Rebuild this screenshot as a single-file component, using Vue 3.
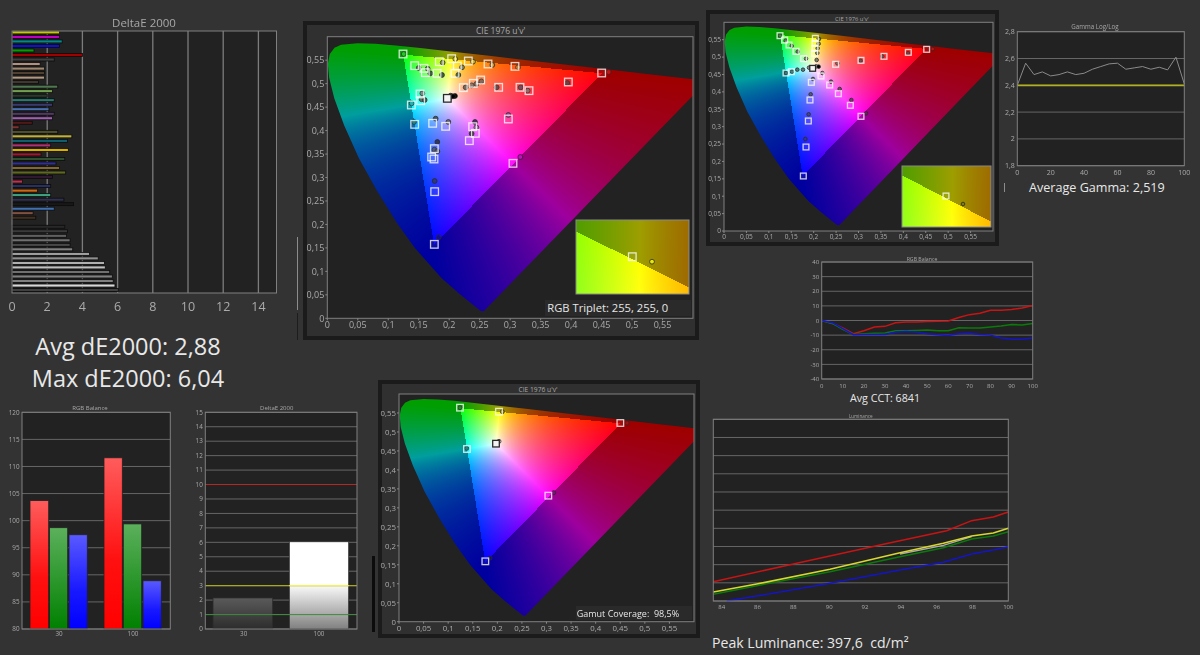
<script setup>
// CIE 1976 spectral locus (u', v'), 380nm tip round to the 650nm end
const LOCUS = [
  [0.2568, 0.0165], [0.2522, 0.0169], [0.2347, 0.035], [0.2161, 0.0549], [0.1877, 0.0871],
  [0.1441, 0.151], [0.1147, 0.2044], [0.0828, 0.2708], [0.0521, 0.3427], [0.0282, 0.4117],
  [0.0119, 0.4698], [0.0035, 0.5131], [0.0014, 0.5432], [0.0046, 0.5638], [0.0123, 0.577],
  [0.0231, 0.5837], [0.0501, 0.5868], [0.0792, 0.5856], [0.1127, 0.5821], [0.1531, 0.5766],
  [0.2026, 0.5694], [0.2623, 0.5604], [0.3315, 0.5501], [0.4035, 0.5393], [0.4692, 0.5296],
  [0.5203, 0.5219], [0.5565, 0.5165], [0.6233, 0.5065]
]

function fieldColor(u, v) {
  const d = 6 * u - 16 * v + 12
  const x = (9 * u) / d
  const y = (4 * v) / d
  const X = x / y
  const Z = (1 - x - y) / y
  const r = 3.2406 * X - 1.5372 - 0.4986 * Z
  const g = -0.9689 * X + 1.8758 + 0.0415 * Z
  const b = 0.0557 * X - 0.204 + 1.057 * Z
  // outside the display triangle the diagram is drawn darker and flatter
  const outside = r < 0 || g < 0 || b < 0
  const dim = outside ? 0.62 : 1
  const gamma = outside ? 1 : 1 / 1.25
  const cr = Math.max(r, 0)
  const cg = Math.max(g, 0)
  const cb = Math.max(b, 0)
  const max = Math.max(cr, cg, cb, 0.0001)
  return [cr, cg, cb].map((c) => Math.round(255 * dim * Math.pow(c / max, gamma)))
}

function paintField(canvas, w, h, range, masked) {
  if (!canvas) return
  canvas.width = w
  canvas.height = h
  const ctx = canvas.getContext('2d')
  const img = ctx.createImageData(w, h)
  const [u0, u1, v0, v1] = range
  for (let py = 0; py < h; py++) {
    for (let px = 0; px < w; px++) {
      const u = u0 + ((px + 0.5) / w) * (u1 - u0)
      const v = v1 - ((py + 0.5) / h) * (v1 - v0)
      const c = fieldColor(u, v)
      const i = (py * w + px) * 4
      img.data[i] = c[0]
      img.data[i + 1] = c[1]
      img.data[i + 2] = c[2]
      img.data[i + 3] = 255
    }
  }
  ctx.putImageData(img, 0, 0)
  if (!masked) return
  ctx.globalCompositeOperation = 'destination-in'
  ctx.beginPath()
  LOCUS.forEach(([u, v], i) => {
    const px = ((u - u0) / (u1 - u0)) * w
    const py = ((v1 - v) / (v1 - v0)) * h
    if (i === 0) ctx.moveTo(px, py)
    else ctx.lineTo(px, py)
  })
  ctx.closePath()
  ctx.fill()
}

// marker coordinates were read off 3x crops, so map them back to page pixels
const marks = (ox, oy, list) => list.map(([x, y, fill]) => ({ x: ox + x / 3, y: oy + y / 3, fill }))

const UV_TICKS = ['0', '0,05', '0,1', '0,15', '0,2', '0,25', '0,3', '0,35', '0,4', '0,45', '0,5', '0,55']
const FIELD = [0, 0.6, 0, 0.6]
const INSET = [0.17, 0.23, 0.5489, 0.5585]

function gamut(cfg) {
  const { x0, x1, y0, y1 } = cfg
  return {
    ...cfg,
    w: Math.round(x1 - x0),
    h: Math.round(y1 - y0),
    ticks: UV_TICKS.map((label, i) => ({
      label,
      x: x0 + (i / 12) * (x1 - x0),
      y: y1 - (i / 12) * (y1 - y0)
    }))
  }
}

const gamuts = [
  gamut({
    cls: 'cie-big',
    view: '303 21 396 320',
    box: [305, 23, 392, 315],
    x0: 327.3, x1: 693, y0: 36.7, y1: 318.3,
    titleX: 500.7, titleY: 34, titleSize: 8.5, tickSize: 9, squareSize: 7.6, dot: 2.4,
    inset: { x: 576, y: 220, w: 113, h: 74 },
    insetSquare: [632.3, 256.7], insetDot: [652, 261.7], insetFill: '#e8e800',
    caption: { text: 'RGB Triplet: 255, 255, 0', x: 547.3, y: 312, size: 11.2, bx: 545, by: 300, bw: 146, bh: 16 },
    squares: marks(300, 10, [
      [309, 132], [344, 167], [372, 175], [376, 188], [418, 155], [411, 190], [455, 146], [472, 168],
      [465, 190], [505, 153], [564, 162], [645, 169], [905, 189], [805, 216], [687, 242], [660, 232],
      [596, 232], [542, 210], [520, 220], [490, 233], [360, 252], [362, 272], [334, 285], [344, 343],
      [398, 340], [437, 349], [518, 350], [526, 370], [508, 392], [625, 327], [403, 416], [395, 441],
      [402, 447], [639, 460], [404, 545], [403, 703]
    ]),
    darkSquare: marks(300, 10, [[442, 265]])[0],
    dots: marks(300, 10, [
      [311, 132, '#0ccc0c'], [356, 174, '#3f5f3f'], [383, 176, '#5a7a50'], [391, 190, '#3f5f3f'],
      [428, 158, '#7a8a40'], [426, 195, '#3f5f3f'], [466, 147, '#e0d000'], [486, 172, '#8a8a60'],
      [475, 195, '#4a6a3a'], [519, 155, '#d8b820'], [577, 165, '#c8902a'], [654, 172, '#c87820'],
      [926, 186, '#d01010'], [802, 219, '#703030'], [683, 242, '#906060'], [662, 232, '#704050'],
      [590, 232, '#604040'], [544, 214, '#806050'], [529, 222, '#907060'], [515, 226, '#907060'],
      [497, 232, '#706050'], [367, 250, '#6a8a80'], [365, 268, '#507060'], [374, 270, '#406050'],
      [335, 280, '#10b0b0'], [342, 336, '#108080'], [407, 326, '#405870'], [445, 336, '#6a6a80'],
      [525, 336, '#503060'], [529, 352, '#a070b0'], [515, 371, '#403040'], [625, 315, '#a040a0'],
      [412, 396, '#303860'], [403, 419, '#405080'], [412, 424, '#505870'], [661, 441, '#c010c0'],
      [404, 513, '#303880'], [416, 682, '#1010a0'], [452, 257, '#2a2a2a'], [450, 262, '#777'],
      [465, 258, '#000'], [459, 259, '#000']
    ])
  }),
  gamut({
    cls: 'cie-small',
    view: '706 10 294 237',
    box: [708, 12, 289, 232],
    x0: 724, x1: 993, y0: 22.3, y1: 231,
    titleX: 852, titleY: 20.5, titleSize: 5.8, tickSize: 6.5, squareSize: 5.8, dot: 1.8,
    inset: { x: 902, y: 166, w: 89, h: 61 },
    insetSquare: [946, 196], insetDot: [963, 204], insetFill: '#808000',
    squares: marks(700, 5, [
      [240, 92], [254, 105], [267, 120], [288, 139], [311, 161], [346, 100], [345, 115], [345, 130], [344, 145],
      [680, 133], [625, 142], [552, 154], [483, 166], [407, 178], [258, 204], [274, 200], [334, 232],
      [363, 213], [389, 240], [415, 266], [451, 301], [483, 334], [330, 285], [325, 348], [318, 426], [310, 513]
    ]),
    darkSquare: marks(700, 5, [[338, 190]])[0],
    dots: marks(700, 5, [
      [240, 92, '#3f7a3f'], [257, 107, '#5a7a50'], [275, 123, '#5a7a50'], [293, 140, '#5a7a50'], [318, 161, '#7a8a60'],
      [357, 102, '#8a8a40'], [356, 116, '#8a8a50'], [353, 130, '#808a50'], [352, 144, '#808a50'], [350, 165, '#7a8a60'],
      [327, 188, '#888'], [349, 184, '#aaa'], [356, 185, '#000'], [698, 132, '#c01010'], [624, 144, '#703030'],
      [547, 154, '#704040'], [482, 167, '#704040'], [412, 175, '#906050'], [258, 204, '#307070'], [276, 200, '#407878'],
      [292, 194, '#507878'], [309, 194, '#608080'], [339, 222, '#606880'], [367, 204, '#807080'], [393, 230, '#705060'],
      [419, 252, '#705060'], [454, 285, '#704060'], [498, 325, '#702060'], [332, 268, '#505880'], [326, 328, '#404890'],
      [316, 402, '#303890']
    ])
  }),
  gamut({
    cls: 'cie-gamut',
    view: '378 380 323 259',
    box: [380, 382, 318, 254],
    x0: 399, x1: 694, y0: 394, y1: 621.7,
    titleX: 538, titleY: 391.5, titleSize: 6.7, tickSize: 7.8, squareSize: 6.6, dot: 2,
    caption: { text: 'Gamut Coverage:  98,5%', x: 576.7, y: 616.5, size: 9, bx: 576, by: 606, bw: 116, bh: 14 },
    squares: marks(375, 375, [
      [255, 98], [372, 110], [736, 144], [276, 222], [520, 362], [331, 559]
    ]),
    darkSquare: marks(375, 375, [[363, 206]])[0],
    dots: marks(375, 375, [
      [255, 98, '#0a8a0a'], [382, 110, '#a09000'], [756, 144, '#a01010'], [275, 220, '#108080'],
      [372, 199, '#ddd'], [536, 353, '#801080'], [345, 549, '#101080']
    ])
  })
]

const range = (n, fn) => Array.from({ length: n }, (_, i) => fn(i))
const hGrid = (y0, y1, labels) => labels.map((label, i) => ({ label, y: y0 + ((y1 - y0) * i) / (labels.length - 1) }))

// ---- dE2000 per patch, horizontal bars
const patchBars = [
  [2.7, '#c8c800'], [2.7, '#c000c0'], [2.85, '#008a8a'], [2.7, '#1010d0'], [1.25, '#00a000'], [4.0, '#a00000'],
  [2.4, '#404040'], [1.6, '#b09080'], [1.85, '#a08870'], [1.85, '#504030'], [1.85, '#b09880'], [1.5, '#403830'],
  [2.6, '#507850'], [2.3, '#70a050'], [2.0, '#2a3a2a'], [2.4, '#2a7a70'], [2.3, '#3a3a70'], [2.1, '#4a70b0'],
  [2.4, '#503a60'], [2.3, '#a060b0'], [1.15, '#501818'], [0.4, '#803030'], [2.6, '#505030'], [3.4, '#c0b040'],
  [3.15, '#106070'], [2.2, '#b03070'], [3.2, '#d8b000'], [1.65, '#a01830'], [3.0, '#305030'], [2.5, '#303090'],
  [2.7, '#806830'], [3.05, '#606820'], [2.3, '#301830'], [0.6, '#c03050'], [2.2, '#283060'], [1.45, '#d06810'],
  [2.2, '#40a080'], [2.95, '#303050'], [3.5, '#181818'], [2.4, '#4070b0'], [1.2, '#805040'], [1.35, '#403020'],
  [0, '#222'],
  [3.0, '#282828'], [3.15, '#3a3a3a'], [3.1, '#606060'], [3.3, '#707070'], [3.3, '#484848'], [3.45, '#808080'],
  [4.4, '#a0a0a0'], [4.9, '#909090'], [5.25, '#b0b0b0'], [5.3, '#c0c0c0'], [5.55, '#707070'], [5.7, '#808080'],
  [5.75, '#808080'], [5.85, '#d8d8d8'], [6.04, '#404040']
]

const DE_X = (val) => 12 + val * 17.6

const rgbBar = (x0, x1, val, fill) => {
  const top = 629 - ((val - 80) / 40) * 216.7
  return { x: x0, y: top, w: x1 - x0, h: 629 - top, fill, stroke: '#222' }
}
const deBar = (x0, x1, val, fill) => {
  const top = 629 - (val / 15) * 216.7
  return { x: x0, y: top, w: x1 - x0, h: 629 - top, fill, stroke: '#2a2a2a' }
}

const series = (vals, x0, x1, y) =>
  vals.map((v, i) => `${x0 + ((x1 - x0) * i) / (vals.length - 1)},${y(v)}`).join(' ')
const gammaY = (v) => 165.7 - ((v - 1.8) / 1) * 134
const balY = (v) => 320.5 - (v / 80) * 117
const lumPts = (list) => list.map(([x, y]) => `${700 + x / 3},${250 + y / 3}`).join(' ')

const charts = [
  {
    cls: 'de-patches',
    view: '0 10 295 310',
    x0: 12, x1: 276.5, y0: 31, y1: 293,
    title: { text: 'DeltaE 2000', x: 144, y: 27, size: 11.5 },
    gridStroke: '#7c7c7c',
    grid: [],
    vGrid: range(7, (i) => DE_X((i + 1) * 2)),
    labelSize: 12.5,
    xLabels: range(8, (i) => ({ label: String(i * 2), x: DE_X(i * 2), y: 311 })),
    rects: patchBars.map(([val, fill], i) => ({
      x: 12, y: 30.9 + i * 4.52, w: val * 17.6, h: 3, fill, stroke: '#0c0c0c'
    })),
    lines: []
  },
  {
    cls: 'rgb-bars',
    view: '0 400 185 245',
    x0: 22, x1: 170.3, y0: 412.3, y1: 629,
    title: { text: 'RGB Balance', x: 90, y: 410, size: 6 },
    gridStroke: '#666',
    grid: hGrid(412.3, 629, ['120', '115', '110', '105', '100', '95', '90', '85', '80']),
    labelSize: 6.3,
    xLabels: [{ label: '30', x: 59, y: 636 }, { label: '100', x: 133, y: 636 }],
    rects: [
      rgbBar(30, 48.7, 103.7, 'url(#bar-red)'), rgbBar(49.5, 67.7, 98.7, 'url(#bar-green)'), rgbBar(69, 87.3, 97.4, 'url(#bar-blue)'),
      rgbBar(104, 122.3, 111.6, 'url(#bar-red)'), rgbBar(123.3, 141.7, 99.4, 'url(#bar-green)'), rgbBar(143, 161.3, 88.9, 'url(#bar-blue)')
    ],
    lines: []
  },
  {
    cls: 'de-bars',
    view: '185 400 190 245',
    x0: 205.3, x1: 357, y0: 412.3, y1: 629,
    title: { text: 'DeltaE 2000', x: 276.7, y: 410, size: 6 },
    gridStroke: '#666',
    grid: hGrid(412.3, 629, ['15', '14', '13', '12', '11', '10', '9', '8', '7', '6', '5', '4', '3', '2', '1', '0']),
    labelSize: 6.3,
    xLabels: [{ label: '30', x: 243.7, y: 636 }, { label: '100', x: 319, y: 636 }],
    rects: [deBar(213, 272.7, 2.15, 'url(#bar-dark)'), deBar(289.3, 348.7, 6.04, 'url(#bar-white)')],
    lines: [
      { points: '205.3,484.5 357,484.5', color: '#b02828', width: 1 },
      { points: '205.3,585.7 357,585.7', color: '#a8a820', width: 1.2 },
      { points: '289.3,585.7 348.7,585.7', color: '#f4f060', width: 1.2 },
      { points: '205.3,614.6 357,614.6', color: '#3f8a3f', width: 1 }
    ]
  },
  {
    cls: 'gamma',
    view: '1000 15 200 170',
    x0: 1017.3, x1: 1184.3, y0: 31.7, y1: 165.7,
    title: { text: 'Gamma Log/Log', x: 1095, y: 29, size: 6.2 },
    gridStroke: '#666',
    grid: hGrid(31.7, 165.7, ['2,8', '2,6', '2,4', '2,2', '2', '1,8']),
    labelSize: 7,
    xLabels: range(6, (i) => ({ label: String(i * 20), x: 1017.3 + i * 33.4, y: 175 })),
    rects: [],
    lines: [
      { points: '1017.3,85.3 1184.3,85.3', color: '#b0b020', width: 1.8 },
      {
        points: series(
          [2.4, 2.565, 2.48, 2.5, 2.47, 2.48, 2.5, 2.48, 2.49, 2.52, 2.54, 2.56, 2.565, 2.52, 2.53, 2.54, 2.52, 2.535, 2.515, 2.61, 2.41],
          1017.3, 1184.3, gammaY
        ),
        color: '#8a8a8a',
        width: 1
      }
    ]
  },
  {
    cls: 'balance',
    view: '800 250 240 142',
    x0: 821.7, x1: 1032.7, y0: 262, y1: 379,
    title: { text: 'RGB Balance', x: 922, y: 260.5, size: 5.2 },
    gridStroke: '#666',
    grid: hGrid(262, 379, ['40', '30', '20', '10', '0', '-10', '-20', '-30', '-40']),
    labelSize: 6,
    xLabels: range(11, (i) => ({ label: String(i * 10), x: 821.7 + i * 21.1, y: 387.5 })),
    rects: [],
    lines: [
      {
        points: series([0, -2, -5, -9, -7, -4.5, -4, -1.5, -1, -1, -0.7, -0.5, -0.3, 2, 4, 5, 7, 7, 7.5, 8.5, 10.3], 821.7, 1032.7, balY),
        color: '#c81414', width: 1.5
      },
      {
        points: series([0, -2, -6, -9.5, -9, -8.8, -8.5, -7, -7, -6.8, -6.5, -7, -7, -5, -5.2, -5.2, -4.5, -3.8, -2.8, -3, -2], 821.7, 1032.7, balY),
        color: '#0a7a0a', width: 1.5
      },
      {
        points: series([0, -1.5, -5.5, -9.7, -9.5, -9.5, -9.5, -8, -7.5, -8, -9, -9.8, -10.3, -9, -8.8, -9.5, -10, -12, -12.8, -12.8, -12], 821.7, 1032.7, balY),
        color: '#1414c8', width: 1.5
      }
    ]
  },
  {
    cls: 'luminance',
    view: '705 408 312 206',
    x0: 713.3, x1: 1008.3, y0: 419.3, y1: 601,
    title: { text: 'Luminance', x: 860.7, y: 417.5, size: 4.6 },
    gridStroke: '#666',
    grid: range(11, (i) => ({ label: '', y: 419.3 + i * 18.17 })),
    labelSize: 6,
    xLabels: range(9, (i) => ({ label: String(84 + i * 2), x: 721.7 + i * 35.83, y: 609 })),
    rects: [],
    lines: [
      { points: lumPts([[40, 995], [280, 942], [540, 885], [740, 842], [815, 812], [880, 801], [925, 786]]), color: '#c81414', width: 1.5 },
      { points: lumPts([[80, 1053], [170, 1038], [390, 1000], [600, 960], [730, 937], [815, 912], [880, 900], [925, 890]]), color: '#1414c8', width: 1.5 },
      { points: lumPts([[40, 1033], [170, 1007], [390, 965], [600, 920], [730, 893], [815, 867], [880, 858], [925, 845]]), color: '#0a7a0a', width: 1.5 },
      { points: lumPts([[600, 912], [730, 886], [815, 860]]), color: '#aaa', width: 1.3 },
      { points: lumPts([[40, 1026], [170, 1002], [390, 958], [600, 908], [730, 880], [815, 858], [880, 849], [925, 835]]), color: '#d8d830', width: 1.6 }
    ]
  }
]
</script>

<template>
  <div class="page">
    <!-- leftovers of the collage cut-outs -->
    <i class="cut cut-a"></i>
    <i class="cut cut-b"></i>
    <i class="cut cut-c"></i>
    <i class="cut cut-d"></i>

    <svg class="defs" width="0" height="0" aria-hidden="true">
      <defs>
        <linearGradient id="bar-red" x1="0" y1="0" x2="0" y2="1">
          <stop offset="0" stop-color="#ff5c5c" /><stop offset="0.6" stop-color="#ff1010" /><stop offset="1" stop-color="#ff0000" />
        </linearGradient>
        <linearGradient id="bar-green" x1="0" y1="0" x2="0" y2="1">
          <stop offset="0" stop-color="#5cb05c" /><stop offset="1" stop-color="#008000" />
        </linearGradient>
        <linearGradient id="bar-blue" x1="0" y1="0" x2="0" y2="1">
          <stop offset="0" stop-color="#5a5aff" /><stop offset="0.6" stop-color="#1818ff" /><stop offset="1" stop-color="#0000ff" />
        </linearGradient>
        <linearGradient id="bar-dark" x1="0" y1="0" x2="0" y2="1">
          <stop offset="0" stop-color="#5a5a5a" /><stop offset="0.5" stop-color="#444" /><stop offset="1" stop-color="#2c2c2c" />
        </linearGradient>
        <linearGradient id="bar-white" x1="0" y1="0" x2="0" y2="1">
          <stop offset="0" stop-color="#fff" /><stop offset="0.48" stop-color="#fff" /><stop offset="1" stop-color="#808080" />
        </linearGradient>
      </defs>
    </svg>

    <svg v-for="c in charts" :key="c.cls" class="chart" :class="c.cls" :viewBox="c.view">
      <text class="title" :x="c.title.x" :y="c.title.y" :font-size="c.title.size">{{ c.title.text }}</text>
      <rect class="plot" :x="c.x0" :y="c.y0" :width="c.x1 - c.x0" :height="c.y1 - c.y0" />
      <g v-for="g in c.grid" :key="g.y">
        <line :x1="c.x0" :x2="c.x1" :y1="g.y" :y2="g.y" :stroke="c.gridStroke" />
        <text class="ylabel" :x="c.x0 - 2.5" :y="g.y + c.labelSize * 0.36" :font-size="c.labelSize">{{ g.label }}</text>
      </g>
      <line v-for="x in c.vGrid" :key="x" :x1="x" :x2="x" :y1="c.y0" :y2="c.y1" :stroke="c.gridStroke" stroke-width="1.3" />
      <rect
        v-for="(r, i) in c.rects"
        :key="i"
        :x="r.x"
        :y="r.y"
        :width="r.w"
        :height="r.h"
        :fill="r.fill"
        :stroke="r.stroke"
        stroke-width="0.8"
      />
      <polyline
        v-for="(l, i) in c.lines"
        :key="i"
        :points="l.points"
        :stroke="l.color"
        :stroke-width="l.width"
        fill="none"
      />
      <rect class="frame" :x="c.x0" :y="c.y0" :width="c.x1 - c.x0" :height="c.y1 - c.y0" />
      <text
        v-for="t in c.xLabels"
        :key="t.label"
        class="xlabel"
        :x="t.x"
        :y="t.y"
        :font-size="c.labelSize"
      >{{ t.label }}</text>
    </svg>

    <svg v-for="g in gamuts" :key="g.cls" class="chart" :class="g.cls" :viewBox="g.view">
      <rect class="panel" :x="g.box[0]" :y="g.box[1]" :width="g.box[2]" :height="g.box[3]" />
      <text class="title" :x="g.titleX" :y="g.titleY" :font-size="g.titleSize">{{ "CIE 1976 u'v'" }}</text>
      <rect class="plot" :x="g.x0" :y="g.y0" :width="g.x1 - g.x0" :height="g.y1 - g.y0" />
      <foreignObject :x="g.x0" :y="g.y0" :width="g.w" :height="g.h">
        <canvas class="field" :ref="(el) => paintField(el, g.w, g.h, FIELD, true)"></canvas>
      </foreignObject>
      <rect class="frame" :x="g.x0" :y="g.y0" :width="g.x1 - g.x0" :height="g.y1 - g.y0" />

      <g v-for="t in g.ticks" :key="t.label">
        <line :x1="g.x0 - 2" :x2="g.x0" :y1="t.y" :y2="t.y" stroke="#888" />
        <line :x1="t.x" :x2="t.x" :y1="g.y1" :y2="g.y1 + 2" stroke="#888" />
        <text class="ylabel" :x="g.x0 - 3" :y="t.y + g.tickSize * 0.36" :font-size="g.tickSize">{{ t.label }}</text>
        <text class="xlabel" :x="t.x" :y="g.y1 + g.tickSize + 1" :font-size="g.tickSize">{{ t.label }}</text>
      </g>

      <circle
        v-for="(d, i) in g.dots"
        :key="'d' + i"
        class="dot"
        :cx="d.x"
        :cy="d.y"
        :r="g.dot"
        :fill="d.fill"
      />
      <rect
        v-for="(s, i) in g.squares"
        :key="'s' + i"
        class="target"
        :x="s.x - g.squareSize / 2"
        :y="s.y - g.squareSize / 2"
        :width="g.squareSize"
        :height="g.squareSize"
      />
      <rect
        class="target-white"
        :x="g.darkSquare.x - g.squareSize / 2"
        :y="g.darkSquare.y - g.squareSize / 2"
        :width="g.squareSize"
        :height="g.squareSize"
      />

      <g v-if="g.inset">
        <foreignObject :x="g.inset.x" :y="g.inset.y" :width="g.inset.w" :height="g.inset.h">
          <canvas class="field" :ref="(el) => paintField(el, g.inset.w, g.inset.h, INSET, false)"></canvas>
        </foreignObject>
        <rect class="inset-frame" :x="g.inset.x" :y="g.inset.y" :width="g.inset.w" :height="g.inset.h" />
        <rect
          class="target"
          :x="g.insetSquare[0] - g.squareSize / 2"
          :y="g.insetSquare[1] - g.squareSize / 2"
          :width="g.squareSize"
          :height="g.squareSize"
        />
        <circle class="dot" :cx="g.insetDot[0]" :cy="g.insetDot[1]" :r="g.dot" :fill="g.insetFill" />
      </g>

      <g v-if="g.caption">
        <rect class="caption-bg" :x="g.caption.bx" :y="g.caption.by" :width="g.caption.bw" :height="g.caption.bh" />
        <text class="caption" :x="g.caption.x" :y="g.caption.y" :font-size="g.caption.size">{{ g.caption.text }}</text>
      </g>
    </svg>

    <div class="note note-de">
      <span>Avg dE2000: 2,88</span>
      <span>Max dE2000: 6,04</span>
    </div>
    <div class="note note-gamma">Average Gamma: 2,519</div>
    <div class="note note-cct">Avg CCT: 6841</div>
    <div class="note note-peak">Peak Luminance: 397,6&nbsp;&nbsp;cd/m²</div>
  </div>
</template>

<style scoped>
.page {
  position: relative;
  width: 1200px;
  height: 655px;
  overflow: hidden;
  background: #333333;
  font-family: "Open Sans", "Noto Sans", sans-serif;
}

/* the page is a collage of pasted report charts: each one sits on a free canvas */
.chart {
  position: absolute;
  display: block;
  filter: blur(0.35px); /* the source is a downscaled screenshot, edges are soft */
}
.de-patches { left: 0; top: 10px; width: 295px; height: 310px; }
.rgb-bars { left: 0; top: 400px; width: 185px; height: 245px; }
.de-bars { left: 185px; top: 400px; width: 190px; height: 245px; }
.gamma { left: 1000px; top: 15px; width: 200px; height: 170px; }
.balance { left: 800px; top: 250px; width: 240px; height: 142px; }
.luminance { left: 705px; top: 408px; width: 312px; height: 206px; }
.cie-big { left: 303px; top: 21px; width: 396px; height: 320px; }
.cie-small { left: 706px; top: 10px; width: 294px; height: 237px; }
.cie-gamut { left: 378px; top: 380px; width: 323px; height: 259px; }

.chart text {
  font-family: "Open Sans", "Noto Sans", sans-serif;
  fill: #ababab;
}
.chart .title {
  text-anchor: middle;
  fill: #a8a8a8;
}
.chart .ylabel { text-anchor: end; }
.chart .xlabel { text-anchor: middle; }
.plot { fill: #222222; }
.frame { fill: none; stroke: #808080; stroke-width: 1; }
.panel { fill: #303030; stroke: #1b1b1b; stroke-width: 4; }
.field { display: block; }
.dot { stroke: #2a2a2a; stroke-width: 0.8; }
.target { fill: rgba(255, 255, 255, 0.06); stroke: rgba(255, 255, 255, 0.78); stroke-width: 1.3; }
.target-white { fill: #f4f4f4; stroke: #2a2a2a; stroke-width: 1.3; }
.inset-frame { fill: none; stroke: #8a8a8a; stroke-width: 1; }
.caption-bg { fill: #2a2a2a; }
.chart .caption { fill: #e6e6e6; white-space: pre; }

.note {
  position: absolute;
  color: #e8e8e8;
  white-space: nowrap;
}
.note-de {
  left: 0;
  top: 330px;
  width: 256px;
  display: flex;
  flex-direction: column;
  align-items: center;
  font-size: 23.5px;
  line-height: 32px;
}
.note-gamma { left: 1029px; top: 178px; font-size: 12.6px; line-height: 20px; }
.note-cct { left: 850px; top: 389px; font-size: 10.7px; line-height: 18px; }
.note-peak { left: 712px; top: 632px; font-size: 14.1px; line-height: 21px; }

.cut { position: absolute; display: block; }
.cut-a { left: 297px; top: 237px; width: 1px; height: 73px; background: #8c8c8c; }
.cut-b { left: 297px; top: 313px; width: 1px; height: 27px; background: #1d1d1d; }
.cut-c { left: 372px; top: 556px; width: 3px; height: 76px; background: #0c0c0c; }
.cut-d { left: 1004px; top: 183px; width: 1px; height: 9px; background: #8c8c8c; }
.defs { position: absolute; }
</style>

<style>
body {
  margin: 0;
  background: #333333;
}
</style>
